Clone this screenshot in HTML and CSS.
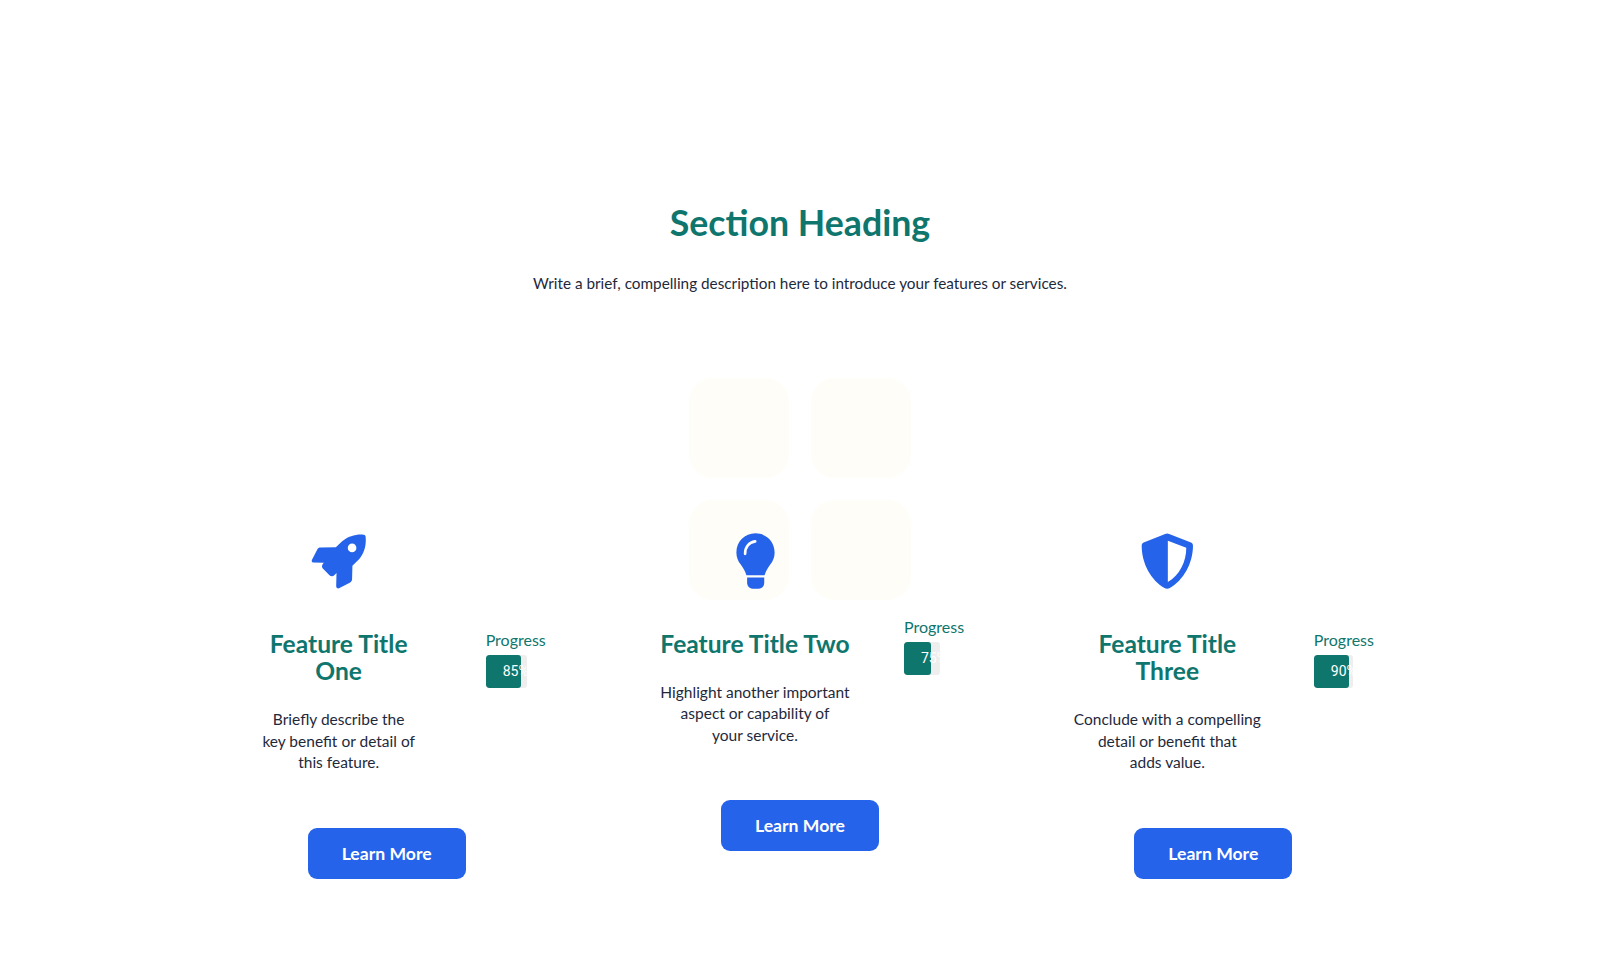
FILE: index.html
```html
<!DOCTYPE html>
<html lang="en">

<head>
    <meta charset="UTF-8">
    <meta name="viewport" content="width=device-width, initial-scale=1.0">
    <title>Features</title>
    <link rel="stylesheet" href="styles.css">
</head>

<body>
    <section class="features">
        <div class="decor">
            <span></span>
            <span></span>
            <span></span>
            <span></span>
        </div>
        <h2>Section Heading</h2>
        <p class="intro">Write a brief, compelling description here to introduce your features or services.</p>
        <div class="cards">
            <div class="card">
                <div class="card-row">
                    <div class="card-main one">
                        <svg class="icon" viewBox="30 24 172 170">
                            <path fill-rule="evenodd" fill="#2563eb" d="M192 28C170 26 146 32 127 48L108 66L62 67C57 67 54 69 52 73L36 104C34 109 36 112 41 112L72 113C67 118 64 124 68 129L88 150C93 155 99 155 104 150L110 144L109 183C109 189 114 192 119 189L150 173C155 170 157 167 157 162L158 122L178 102C194 84 200 60 198 36C198 31 196 28 192 28ZM157 55A13 13 0 1 1 157 81A13 13 0 1 1 157 55Z" />
                        </svg>
                        <h3>Feature Title<br>One</h3>
                        <p>Briefly describe the<br>key benefit or detail of<br>this feature.</p>
                    </div>
                    <div class="progress">
                        <span class="progress-label">Progress</span>
                        <div class="bar bar-one">
                            <div class="fill" style="width: 85%">85%</div>
                        </div>
                    </div>
                </div>
                <a href="#" class="btn">Learn More</a>
            </div>
            <div class="card">
                <div class="card-row">
                    <div class="card-main two">
                        <svg class="icon" viewBox="27 24 150 170">
                            <path fill="#2563eb" d="M105 25C73 25 48 50 48 82C48 96 53 108 61 118C68 127 74 138 78 150H132C136 138 142 127 149 118C157 108 162 96 162 82C162 50 137 25 105 25Z" />
                            <path fill="#2563eb" d="M80 157H131V172C131 182 125 190 115 190H96C86 190 80 182 80 172Z" />
                            <path fill="none" stroke="#fff" stroke-width="8" stroke-linecap="round" d="M74 86C74 66 86 52 104 49" />
                        </svg>
                        <h3>Feature Title Two</h3>
                        <p>Highlight another important<br>aspect or capability of<br>your service.</p>
                    </div>
                    <div class="progress">
                        <span class="progress-label">Progress</span>
                        <div class="bar bar-two">
                            <div class="fill" style="width: 75%">75%</div>
                        </div>
                    </div>
                </div>
                <a href="#" class="btn">Learn More</a>
            </div>
            <div class="card">
                <div class="card-row">
                    <div class="card-main three">
                        <svg class="icon" viewBox="24 24 170 170">
                            <path fill-rule="evenodd" fill="#2563eb" d="M102 27L38 52C34 54 32 57 32 62C32 115 60 165 100 188C105 191 111 191 116 188C156 165 185 115 185 62C185 57 183 54 179 52L114 27C110 25 106 25 102 27ZM110 47L165 68C165 110 145 150 110 170Z" />
                        </svg>
                        <h3>Feature Title<br>Three</h3>
                        <p>Conclude with a compelling<br>detail or benefit that<br>adds value.</p>
                    </div>
                    <div class="progress">
                        <span class="progress-label">Progress</span>
                        <div class="bar bar-three">
                            <div class="fill" style="width: 90%">90%</div>
                        </div>
                    </div>
                </div>
                <a href="#" class="btn">Learn More</a>
            </div>
        </div>
    </section>
</body>

</html>
```

FILE: styles.css
```css
* {
    padding: 0;
    margin: 0;
    box-sizing: border-box;
}

a {
    text-decoration: none;
}

body {
    background: #fff;
    color: #1e293b;
    font-family: "Lato", "Liberation Sans", sans-serif;
}

.features {
    position: relative;
    width: 1200px;
    height: 978px;
    margin: 0 auto;
    padding-top: 200px;
    text-align: center;
}

.decor {
    position: absolute;
    top: 378px;
    left: 489px;
    display: grid;
    grid-template-columns: 100px 100px;
    gap: 22px;
}

.decor span {
    height: 100px;
    border-radius: 24px;
    background: #fefdf7;
}

h2 {
    position: relative;
    height: 46px;
    font-size: 35.7px;
    line-height: 45px;
    font-weight: 700;
    color: #0f766e;
}

.intro {
    position: relative;
    margin-top: 26px;
    height: 22px;
    font-size: 15.3px;
    line-height: 22px;
}

.cards {
    position: relative;
    display: grid;
    grid-template-columns: repeat(3, 1fr);
    gap: 40px;
    margin-top: 239px;
}

.card-row {
    display: flex;
    justify-content: center;
    align-items: center;
}

.card-main {
    padding-bottom: 12px;
}

.one {
    width: 222px;
    margin-right: 36px;
}

.two {
    width: 238px;
    margin-right: 30px;
}

.three {
    width: 229px;
    margin-right: 32px;
}

.icon {
    display: block;
    width: 57px;
    height: 57px;
    margin: 0 auto 41px;
}

h3 {
    font-size: 24.6px;
    line-height: 26.6px;
    font-weight: 700;
    color: #0f766e;
}

.card-main p {
    margin-top: 25px;
    font-size: 15.5px;
    line-height: 21.5px;
}

.card-main.two p {
    margin-top: 24px;
}

.progress {
    width: 60px;
    text-align: left;
}

.progress-label {
    display: block;
    height: 25px;
    font-size: 16px;
    line-height: 20px;
    color: #0f766e;
}

.bar {
    height: 33px;
    border-radius: 3px;
    background: #eee;
    overflow: hidden;
}

.bar-one {
    width: 41px;
}

.bar-two {
    width: 36px;
}

.bar-three {
    width: 39px;
}

.fill {
    height: 33px;
    padding-left: 17px;
    border-radius: 3px;
    background: #0f766e;
    color: #fff;
    font-family: "Roboto", sans-serif;
    font-size: 14px;
    font-weight: 400;
    line-height: 33px;
    white-space: nowrap;
}

.btn {
    display: block;
    width: 158px;
    height: 51px;
    margin: 42px auto 0;
    border-radius: 9px;
    background: #2563eb;
    color: #fff;
    font-size: 17.6px;
    font-weight: 700;
    line-height: 51px;
}
```
